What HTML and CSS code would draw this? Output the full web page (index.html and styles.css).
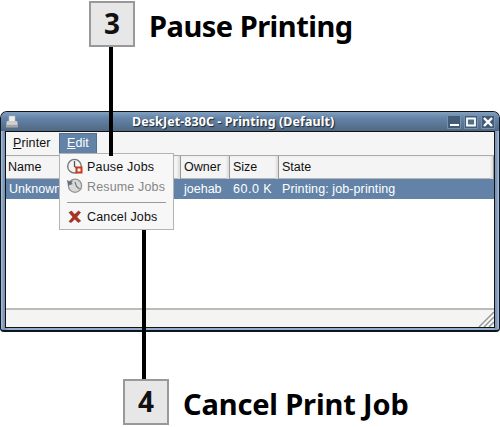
FILE: index.html
```html
<!DOCTYPE html>
<html lang="en">
<head>
    <meta charset="UTF-8">
    <title>Print Queue</title>
    <link rel="stylesheet" href="styles.css">
</head>
<body>
    <div class="step step-top">
        <span class="number">3</span>
        <h2 class="pause-title">Pause Printing</h2>
    </div>

    <div class="window">
        <div class="titlebar">
            <svg class="printer" width="14" height="14" viewBox="0 0 14 14">
                <path d="M4 1h6v6H4z" fill="#eee" stroke="#bbb" stroke-width=".6"/>
                <path d="M2 6h10l1 3H1z" fill="#ccc"/>
                <path d="M1 8.500h12v4H1z" fill="#a4a4a4"/>
                <path d="M2 9h10" stroke="#eee"/>
            </svg>
            <h1>DeskJet-830C - Printing (Default)</h1>
            <div class="controls">
                <svg width="14" height="14" viewBox="0 0 14 14"><path d="M.5.5h13v13H.5z" fill="#415b78" stroke="#7890aa"/><path d="M3 10h9" stroke="#fff" stroke-width="2"/></svg>
                <svg width="14" height="14" viewBox="0 0 14 14"><path d="M.5.5h13v13H.5z" fill="#415b78" stroke="#7890aa"/><path d="M3 3.500h8v7H3z" fill="#536e8a" stroke="#fff" stroke-width="1.8"/></svg>
                <svg width="14" height="14" viewBox="0 0 14 14"><path d="M.5.5h13v13H.5z" fill="#415b78" stroke="#7890aa"/><path d="M3 3l8 8M11 3l-8 8" stroke="#fff" stroke-width="2.4"/></svg>
            </div>
        </div>
        <div class="content">
            <div class="menubar">
                <span class="menu-item"><u>P</u>rinter</span>
                <span class="menu-item active"><u>E</u>dit</span>
            </div>
            <div class="row head">
                <span>Name</span><span>Owner</span><span>Size</span><span>State</span>
            </div>
            <div class="row selected">
                <span>Unknown</span><span>joehab</span><span class="size">60.0 K</span><span class="state">Printing: job-printing</span>
            </div>
            <div class="list"></div>
            <div class="statusbar">
                <svg width="16" height="16" viewBox="0 0 16 16">
                    <path d="M1 16L16 1M6 16L16 6M11 16l5-5" stroke="#999" stroke-width="1.5"/>
                    <path d="M3 16L16 3M8 16l8-8" stroke="#fff"/>
                </svg>
            </div>
        </div>
    </div>

    <div class="menu">
        <div class="entry">
            <svg width="18" height="18" viewBox="0 0 18 18">
                <circle cx="7.500" cy="8.200" r="6.800" fill="#f4f4f4" stroke="#777" stroke-width="1.400"/>
                <path d="M7.500 3v5.500l3 2" fill="none" stroke="#555" stroke-width="1.300"/>
                <path d="M9.500 9.500h5v5h-5z" fill="#fff" stroke="#c8381c" stroke-width="2"/>
            </svg>
            <span>Pause Jobs</span>
        </div>
        <div class="entry disabled">
            <svg width="18" height="18" viewBox="0 0 18 18">
                <circle cx="8" cy="7.700" r="6.600" fill="#d9d9d9" stroke="#929292" stroke-width="1.300"/>
                <path d="M8 4l1.500 4.500 3 2.500" fill="none" stroke="#777" stroke-width="1.200"/>
                <path d="M0 2l1 5.500 5-1.500-1.500-1L6 2.500 3 3.500z" fill="#607080"/>
            </svg>
            <span class="resume">Resume Jobs</span>
        </div>
        <div class="separator"></div>
        <div class="entry">
            <svg width="18" height="18" viewBox="0 0 18 18">
                <path d="M2 4.500l2.500-1.500L7.700 6.500 11.500 3l2 1.500L9.700 9l4 4-2.500 1.500-3.500-3.500L4.200 14.500 2 13.500 6 9z" fill="#b5301c" stroke="#6e2a20" stroke-width=".6"/>
            </svg>
            <span class="cancel">Cancel Jobs</span>
        </div>
    </div>

    <div class="line line-top"></div>
    <div class="line line-bottom"></div>

    <div class="step step-bottom">
        <span class="number">4</span>
        <h2 class="cancel-title">Cancel Print Job</h2>
    </div>
</body>
</html>
```
FILE: styles.css
```css
* {
    box-sizing: border-box;
}

body {
    position: relative;
    width: 500px;
    height: 427px;
    margin: 0;
    overflow: hidden;
    background: #fff;
    color: #111;
    font: 12.5px/20px "Liberation Sans", Arial, sans-serif;
}

svg {
    display: block;
    flex: none;
}

h1, h2 {
    margin: 0;
    font-family: "Noto Sans", sans-serif;
    white-space: nowrap;
}

.step {
    display: flex;
    align-items: center;
    gap: 14px;
    height: 46px;
}

.step-top {
    margin: 1px 0 64px 89px;
}

.step-bottom {
    margin: 47px 0 0 123px;
}

.step h2 {
    color: #000;
    font-size: 29px;
    line-height: 46px;
    padding-top: 4px;
}

.pause-title {
    letter-spacing: -0.5px;
}

.cancel-title {
    letter-spacing: -0.15px;
}

.number {
    width: 46px;
    height: 46px;
    border: 2px solid #999;
    background: #e7e7e7;
    font: bold 28px/41px "Noto Sans", sans-serif;
    text-align: center;
}

.window {
    height: 221px;
    padding: 0 4px 3px;
    border: 1px solid #10151c;
    border-bottom-width: 2px;
    border-radius: 7px 7px 4px 4px;
    background: linear-gradient(90deg, #a9c0dc, #7791b3 3px, #93add0 8px, #93add0 492px, #7791b3 495px, #a9c0dc);
}

.titlebar {
    display: flex;
    align-items: center;
    height: 19px;
    margin: 0 -4px;
    padding: 0 4px;
    border-radius: 6px 6px 0 0;
    background: linear-gradient(#83a0bf, #6585a9 30%, #4f6884);
}

.titlebar h1 {
    flex: 1;
    padding-left: 113px;
    color: #fff;
    font-size: 12.5px;
    line-height: 18px;
    letter-spacing: 0.07px;
    text-shadow: 1px 1px 1px #1c2733;
}

.controls {
    display: flex;
    gap: 3px;
}

.content {
    height: 197px;
    border: 1px solid #111;
    background: #fff;
}

.menubar {
    display: flex;
    height: 23px;
    padding-top: 1px;
    background: #f4f5f4;
    letter-spacing: 0.1px;
}

.menu-item {
    width: 53px;
    height: 21px;
    padding-left: 7px;
}

.menu-item.active {
    width: 38px;
    border: 1px solid #526f91;
    background: #6283a7;
    color: #fff;
    line-height: 18px;
}

.row {
    display: grid;
    grid-template-columns: 175px 49px 49px 1fr;
    height: 20px;
    white-space: nowrap;
}

.row span {
    padding-left: 3px;
}

.head {
    height: 24px;
    border-top: 1px solid #aaa;
    border-bottom: 1px solid #aaa;
    background: #f4f4f4;
    line-height: 23px;
}

.head span {
    border-right: 1px solid #999;
    box-shadow: inset -2px 0 2px #ddd;
}

.head span:first-child {
    padding-left: 2px;
}

.selected {
    background: #6283a7;
    color: #fff;
    line-height: 21px;
}

.selected .size {
    letter-spacing: 0.5px;
}

.selected .state {
    letter-spacing: 0.1px;
}

.list {
    height: 109px;
}

.statusbar {
    display: flex;
    justify-content: flex-end;
    align-items: flex-end;
    height: 19px;
    border-top: 2px solid #bbb;
    background: #f4f5f3;
}

/* drop-down lies over the window */
.menu {
    position: absolute;
    left: 59px;
    top: 153px;
    width: 115px;
    height: 77px;
    padding: 3px 7px;
    border: 1px solid #b4b4b4;
    background: #f7f7f7;
}

.entry {
    display: flex;
    align-items: center;
    gap: 2px;
    height: 20px;
    letter-spacing: 0.2px;
    white-space: nowrap;
}

.entry .resume {
    letter-spacing: 0.15px;
}

.entry .cancel {
    letter-spacing: 0.15px;
}

.disabled {
    color: #858585;
}

.separator {
    height: 1px;
    margin: 5px 0 4px;
    background: #999;
}

/* callout lines */
.line {
    position: absolute;
    width: 4px;
    background: #000;
}

.line-top {
    left: 109px;
    top: 47px;
    height: 109px;
}

.line-bottom {
    left: 142px;
    top: 230px;
    height: 149px;
}
```
